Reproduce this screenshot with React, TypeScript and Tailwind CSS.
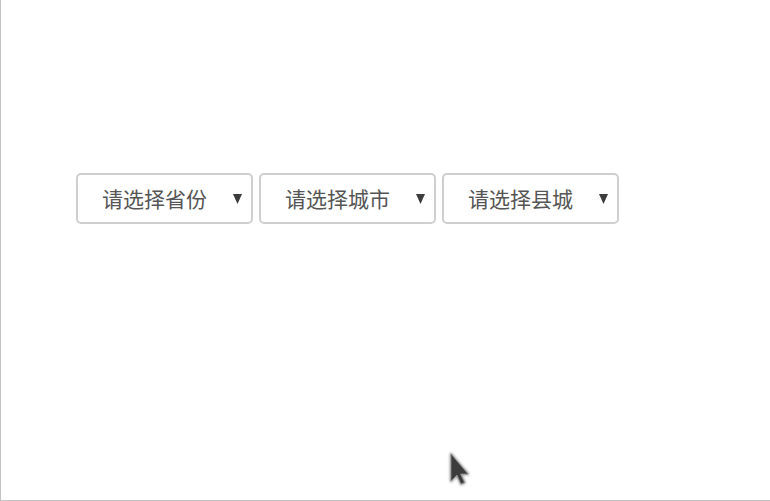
import React from "react";

const Select = ({ label }: { label: string }) => (
  <div className="relative flex h-[51px] w-[177px] items-center rounded-[5px] border-2 border-[#cfcfcf] bg-white pl-[24px]">
    <span
      className="text-[21px] leading-none text-[#555555]"
      style={{ fontFamily: '"Noto Sans CJK SC", "Liberation Sans", sans-serif' }}
    >
      {label}
    </span>
    <svg className="absolute right-[9px] top-[19px]" width="9" height="10" viewBox="0 0 9 10">
      <polygon points="0,0 9,0 4.5,10" fill="#3d3d3d" />
    </svg>
  </div>
);

export default function App() {
  return (
    <div className="relative h-[501px] w-[770px] border-b border-l border-[#c4c4c4] bg-white">
      <div className="flex gap-[6px] pl-[75px] pt-[173px]">
        <Select label="请选择省份" />
        <Select label="请选择城市" />
        <Select label="请选择县城" />
      </div>
      <svg
        className="absolute left-[440px] top-[448px]"
        width="36"
        height="45"
        viewBox="0 0 36 45"
      >
        <defs>
          <filter id="s" x="-50%" y="-50%" width="200%" height="200%">
            <feGaussianBlur stdDeviation="1.2" />
          </filter>
        </defs>
        <path
          d="M10 6 L10 33 L16 27 L20 36 L23.5 34.5 L19.5 26 L27 26 Z"
          fill="none"
          stroke="#9a9a9a"
          strokeWidth="2.5"
          strokeLinejoin="round"
          filter="url(#s)"
        />
        <path
          d="M10 6 L10 33 L16 27 L20 36 L23.5 34.5 L19.5 26 L27 26 Z"
          fill="#3c3c3c"
          stroke="#8a8a8a"
          strokeWidth="0.8"
          strokeLinejoin="round"
        />
      </svg>
    </div>
  );
}
